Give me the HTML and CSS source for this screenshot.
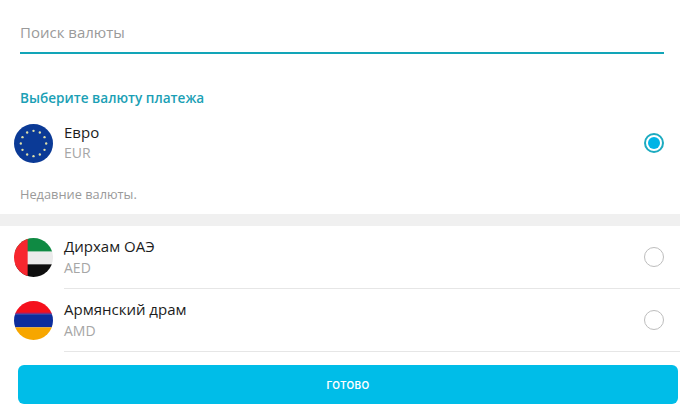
FILE: index.html
```html
<!DOCTYPE html>
<html lang="ru">
<head>
<meta charset="utf-8">
<title>Выбор валюты</title>
<link rel="stylesheet" href="styles.css">
</head>
<body>
<div class="page">
  <div class="search"><span class="search-text">Поиск валюты</span></div>
  <h2 class="heading">Выберите валюту платежа</h2>
  <div class="row row-selected">
    <svg class="flag" viewBox="0 0 40 40">
      <circle cx="20" cy="20" r="20" fill="#0b3a96"/>
      <g fill="#dfe0a8">
        <circle cx="20" cy="7" r="1.2"/><circle cx="26.5" cy="8.7" r="1.2"/><circle cx="31.3" cy="13.5" r="1.2"/><circle cx="33" cy="20" r="1.2"/><circle cx="31.3" cy="26.5" r="1.2"/><circle cx="26.5" cy="31.3" r="1.2"/><circle cx="20" cy="33" r="1.2"/><circle cx="13.5" cy="31.3" r="1.2"/><circle cx="8.7" cy="26.5" r="1.2"/><circle cx="7" cy="20" r="1.2"/><circle cx="8.7" cy="13.5" r="1.2"/><circle cx="13.5" cy="8.7" r="1.2"/>
      </g>
    </svg>
    <div class="info info-top">
      <div class="name">Евро</div>
      <div class="code">EUR</div>
    </div>
    <span class="radio radio-on"></span>
  </div>
  <div class="recent">Недавние валюты.</div>
  <div class="band"></div>
  <div class="row">
    <svg class="flag" viewBox="0 0 40 40">
      <defs><clipPath id="c1"><circle cx="20" cy="20" r="20"/></clipPath></defs>
      <g clip-path="url(#c1)">
        <rect width="40" height="14" fill="#0f8a43"/>
        <rect y="14" width="40" height="13" fill="#ebebeb"/>
        <rect y="27" width="40" height="13" fill="#0e0e0e"/>
        <rect width="14" height="40" fill="#f7262e"/>
      </g>
    </svg>
    <div class="info info-line">
      <div class="text">
        <div class="name">Дирхам ОАЭ</div>
        <div class="code">AED</div>
      </div>
      <span class="radio"></span>
    </div>
  </div>
  <div class="row">
    <svg class="flag" viewBox="0 0 40 40">
      <defs><clipPath id="c2"><circle cx="20" cy="20" r="20"/></clipPath></defs>
      <g clip-path="url(#c2)">
        <rect width="40" height="13" fill="#f5101c"/>
        <rect y="12" width="40" height="1.5" fill="#8a2a7a"/>
        <rect y="13.5" width="40" height="13.5" fill="#0d2d9c"/>
        <rect y="27" width="40" height="13" fill="#f7a600"/>
      </g>
    </svg>
    <div class="info info-line">
      <div class="text">
        <div class="name">Армянский драм</div>
        <div class="code">AMD</div>
      </div>
      <span class="radio"></span>
    </div>
  </div>
  <button class="done">ГОТОВО</button>
</div>
</body>
</html>
```
FILE: styles.css
```css
* { box-sizing: border-box; }
html, body { margin: 0; padding: 0; background: #fff; }
body { width: 680px; height: 414px; overflow: hidden; font-family: "Open Sans", "Noto Sans", sans-serif; }
.page { display: flex; flex-direction: column; height: 414px; }
.search { margin: 0 16px 0 20px; height: 54px; padding-top: 22px; border-bottom: 2px solid #12a5b8; }
.search-text { font-size: 15px; line-height: 20px; color: #9a9a9a; display: block; }
.heading { margin: 34px 0 0 20px; font-size: 13.6px; line-height: 20px; font-weight: 600; color: #1b9fb5; }
.row { display: flex; align-items: flex-start; padding-left: 14px; height: 63px; }
.row-selected { height: 40px; margin-top: 15px; align-items: center; padding-right: 16px; }
.flag { width: 39px; height: 39px; flex: none; margin-right: 11px; }
.row:not(.row-selected) .flag { margin-top: 12px; }
.info { flex: 1; }
.info-top { margin-top: -1px; }
.info-line { display: flex; align-items: center; justify-content: space-between; height: 63px; padding-right: 16px; border-bottom: 1px solid #e6e6e6; }
.name { font-size: 15px; line-height: 20px; color: #1c1c1c; }
.code { font-size: 14px; line-height: 20px; color: #a6a6a6; margin-top: 1px; }
.text .code { margin-top: 2px; }
.radio { width: 20px; height: 20px; border-radius: 50%; border: 1.5px solid #bdbdbd; flex: none; }
.radio-on { border: 2px solid #1cabc0; position: relative; }
.radio-on::after { content: ""; position: absolute; inset: 2px; border-radius: 50%; background: #00b4e6; }
.recent { margin: 21px 0 0 20px; font-size: 12.8px; line-height: 20px; color: #9a9a9a; }
.band { height: 12px; margin-top: 10px; background: #f0f0f0; }
.done { margin: 13px 2px 0 18px; height: 39px; flex: none; border: 0; border-radius: 6px; background: #00bde8; color: #fff; font-family: Inter, sans-serif; font-size: 10px; font-weight: 600; letter-spacing: 0.3px; }
```
